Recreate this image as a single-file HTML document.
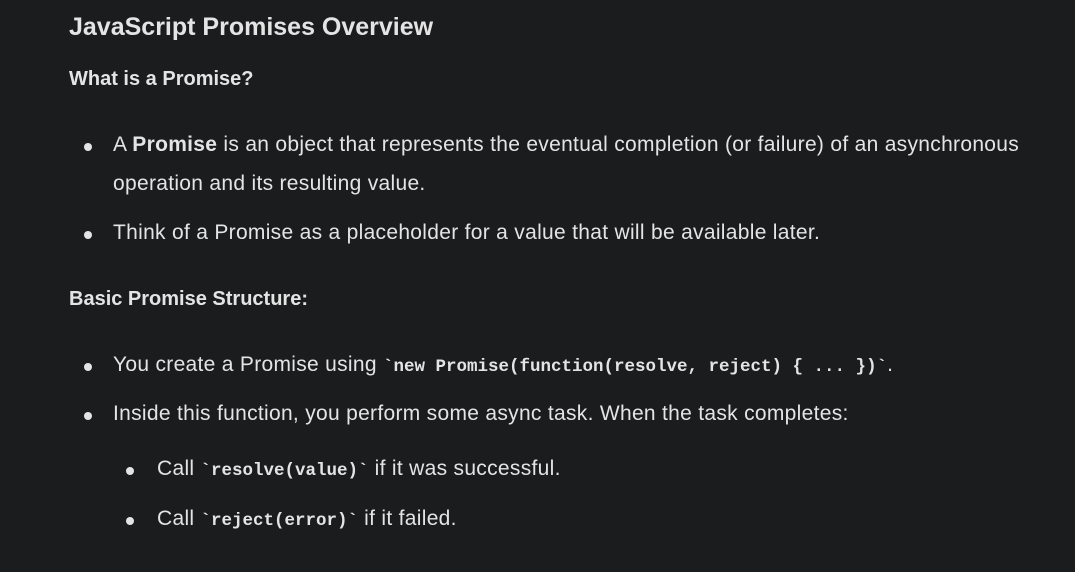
<!DOCTYPE html>
<html><head><meta charset="utf-8"><style>
html,body{margin:0;padding:0;background:#1b1c1e;width:1075px;height:572px;overflow:hidden}
body{font-family:"Liberation Sans",sans-serif;color:#e4e4e4;position:relative}
.a{position:absolute;white-space:nowrap;line-height:1}
.h1{font-size:25px;font-weight:bold;left:69px;top:15px}
.h3{font-size:20px;font-weight:bold;left:69px}
.t{font-size:21px;letter-spacing:0.3px}
.d{position:absolute;width:8px;height:8px;border-radius:50%;background:#e4e4e4}
code{font-family:"Liberation Mono",monospace;font-weight:bold;font-size:17.5px;letter-spacing:0}
b{font-weight:bold}
</style></head><body>
<div class="a h1">JavaScript Promises Overview</div>
<div class="a h3" style="top:69px">What is a Promise?</div>
<div class="d" style="left:84px;top:143px"></div>
<div class="a t" style="left:113px;top:134px">A <b>Promise</b> is an object that represents the eventual completion (or failure) of an asynchronous</div>
<div class="a t" style="left:113px;top:173px">operation and its resulting value.</div>
<div class="d" style="left:84px;top:231px"></div>
<div class="a t" style="left:113px;top:222px">Think of a Promise as a placeholder for a value that will be available later.</div>
<div class="a h3" style="top:289px">Basic Promise Structure:</div>
<div class="d" style="left:84px;top:363px"></div>
<div class="a t" style="left:113px;top:354px">You create a Promise using <code>`new Promise(function(resolve, reject) { ... })`</code>.</div>
<div class="d" style="left:84px;top:412px"></div>
<div class="a t" style="left:113px;top:403px">Inside this function, you perform some async task. When the task completes:</div>
<div class="d" style="left:126px;top:467px"></div>
<div class="a t" style="left:157px;top:458px">Call <code>`resolve(value)`</code> if it was successful.</div>
<div class="d" style="left:126px;top:517px"></div>
<div class="a t" style="left:157px;top:508px">Call <code>`reject(error)`</code> if it failed.</div>
</body></html>
